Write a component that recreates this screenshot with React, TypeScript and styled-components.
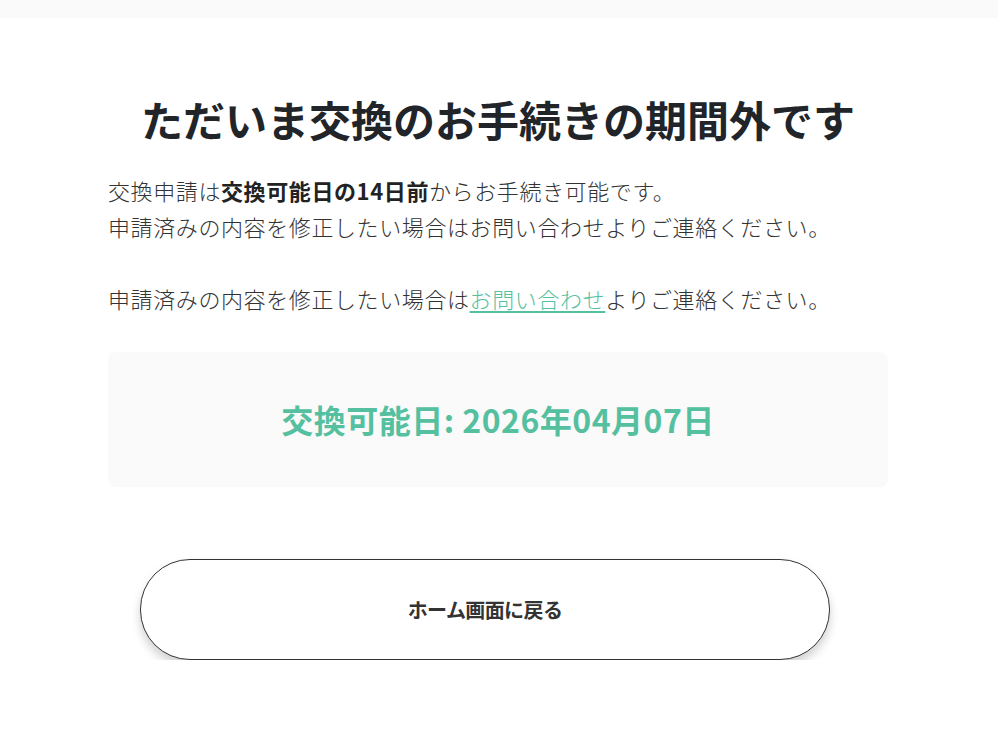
import React from 'react'
import styled, { createGlobalStyle } from 'styled-components'

const GlobalStyle = createGlobalStyle`
  html, body {
    margin: 0;
    padding: 0;
    background: #fff;
  }
  body {
    font-family: "Noto Sans CJK JP", "Noto Sans", sans-serif;
    color: #333;
  }
`

const TopBar = styled.header`
  height: 18px;
  background: #fafafa;
`

const Main = styled.main`
  max-width: 780px;
  margin: 0 auto;
  padding: 72px 0 0;
  transform: translateX(-1px);
`

const Title = styled.h1`
  margin: 0 0 25px;
  font-size: 42px;
  line-height: 57px;
  font-weight: 700;
  text-align: center;
  color: #212529;
`

const Text = styled.p`
  margin: 0 0 36px;
  font-size: 22px;
  line-height: 36px;
  font-weight: 300;
  letter-spacing: 0.6px;
  color: #333;

  strong {
    font-weight: 700;
    color: #222;
  }
`

const Link = styled.a`
  color: #55c0a0;
  text-decoration: underline;
  text-decoration-thickness: 2px;
  text-underline-offset: 3px;
`

const DateBox = styled.div`
  margin-top: 0;
  padding: 45px 0;
  background: #fafafa;
  border-radius: 8px;
  text-align: center;
`

const DateText = styled.p`
  margin: 0;
  font-size: 32px;
  line-height: 45px;
  font-weight: 700;
  letter-spacing: 0.5px;
  color: #55c0a0;
`

const ButtonRow = styled.div`
  padding: 72px 0 0 32px;
`

const HomeButton = styled.button`
  display: block;
  width: 690px;
  padding: 36px 0;
  background: #fff;
  border: 1px solid #333;
  border-radius: 50px;
  box-shadow: 0 6px 10px rgba(0, 0, 0, 0.18);
  font-family: inherit;
  font-size: 20px;
  line-height: 27px;
  font-weight: 700;
  letter-spacing: -0.6px;
  color: #333;
  cursor: pointer;
`

export default function App() {
  return (
    <>
      <GlobalStyle />
      <TopBar />
      <Main>
        <Title>ただいま交換のお手続きの期間外です</Title>
        <Text>
          交換申請は<strong>交換可能日の14日前</strong>からお手続き可能です。
          <br />
          申請済みの内容を修正したい場合はお問い合わせよりご連絡ください。
        </Text>
        <Text>
          申請済みの内容を修正したい場合は<Link href="#">お問い合わせ</Link>よりご連絡ください。
        </Text>
        <DateBox>
          <DateText>交換可能日: 2026年04月07日</DateText>
        </DateBox>
        <ButtonRow>
          <HomeButton>ホーム画面に戻る</HomeButton>
        </ButtonRow>
      </Main>
    </>
  )
}
